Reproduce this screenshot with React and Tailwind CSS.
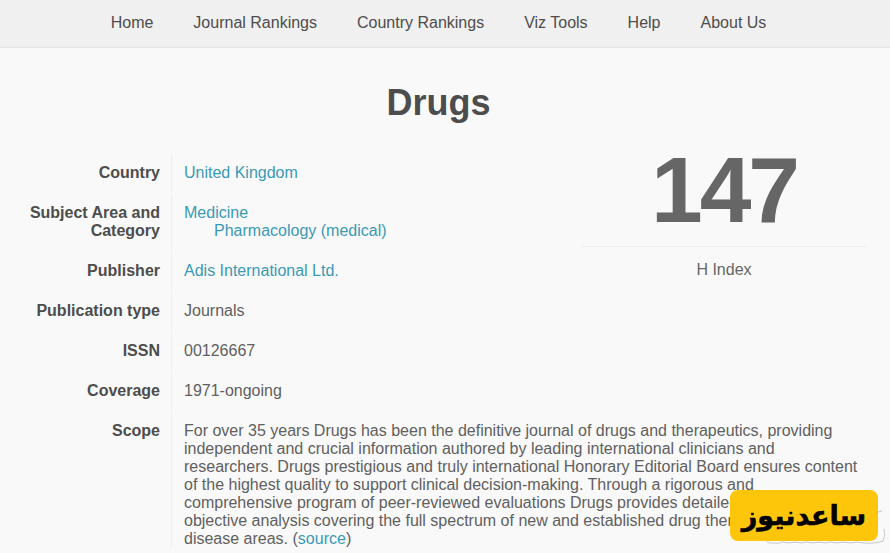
const navItems = ["Home", "Journal Rankings", "Country Rankings", "Viz Tools", "Help", "About Us"];

function Row({ label, children }) {
  return (
    <div className="flex mb-[2px]">
      <div className="w-[160px] shrink-0 text-right font-bold text-[#4d4d4d] py-[10px]">{label}</div>
      <div className="ml-[11px] border-l border-[#eeeeee] pl-[12px] py-[10px] flex-1 text-[#606060]">{children}</div>
    </div>
  );
}

function A({ children }) {
  return <a className="text-[#3a9ab5]">{children}</a>;
}

export default function App() {
  return (
    <div className="relative w-[890px] h-[553px] overflow-hidden bg-[#f9f9f9] text-[16px] leading-[18px] font-['Liberation_Sans',Arial,sans-serif]">
      <nav className="h-[48px] bg-[#f0f0f0] border-b border-[#e4e4e4] w-full">
        <ul className="w-[877px] h-full pb-[2px] flex justify-center items-center gap-[40px] text-[#4d4d4d]">
          {navItems.map((n) => (
            <li key={n}>{n}</li>
          ))}
        </ul>
      </nav>
      <h1 className="w-[877px] text-center font-bold text-[36px] leading-[40px] text-[#4d4d4d] mt-[35px] mb-[31px]">Drugs</h1>
      <div className="flex w-[877px]">
        <div className="w-[580px] shrink-0">
          <Row label="Country"><A>United Kingdom</A></Row>
          <Row label={<>Subject Area and<br />Category</>}>
            <A>Medicine</A>
            <div className="pl-[30px]"><A>Pharmacology (medical)</A></div>
          </Row>
          <Row label="Publisher"><A>Adis International Ltd.</A></Row>
          <Row label="Publication type">Journals</Row>
          <Row label="ISSN">00126667</Row>
          <Row label="Coverage">1971-ongoing</Row>
        </div>
        <div className="w-[284px] ml-[2px] text-center">
          <div className="h-[93px] text-[93px] leading-[73px] tracking-[-3px] font-bold text-[#666666] border-b border-[#eeeeee]">147</div>
          <div className="mt-[14px] text-[#666666]">H Index</div>
        </div>
      </div>
      <div className="flex w-[877px]">
        <div className="w-[160px] shrink-0 text-right font-bold text-[#4d4d4d] pt-[10px]">Scope</div>
        <div className="ml-[11px] border-l border-[#eeeeee] pl-[12px] pt-[10px] w-[690px] text-[#606060]">
          For over 35 years Drugs has been the definitive journal of drugs and therapeutics, providing independent and crucial information authored by leading international clinicians and researchers. Drugs prestigious and truly international Honorary Editorial Board ensures content of the highest quality to support clinical decision-making. Through a rigorous and comprehensive program of peer-reviewed evaluations Drugs provides detailed and<br />objective analysis covering the full spectrum of new and established drug therapies across disease areas. (<A>source</A>)
        </div>
      </div>
      {/* faint scribble around the watermark */}
      <svg className="absolute left-[760px] top-[500px]" width="130" height="53" viewBox="0 0 130 53" fill="none" stroke="#c8c8c8" strokeWidth="1">
        <path d="M5 38 q2 6 8 5 q6 1 10-1 q6 2 12 0 q6 2 12 0 q6 2 12 0 q6 2 12 0 q6 2 12 0 q8 2 14 0 q14 3 26-1 q3-6 1-12" />
        <path d="M118 12 l4-1" />
      </svg>
      <div dir="rtl" className="absolute left-[730px] top-[490px] w-[148px] h-[51px] rounded-[8px] bg-[#fec60b] flex items-center justify-center text-black font-bold text-[27px] leading-none [-webkit-text-stroke:0.6px_black] font-['DejaVu_Sans',sans-serif]">ساعدنیوز</div>
    </div>
  );
}
